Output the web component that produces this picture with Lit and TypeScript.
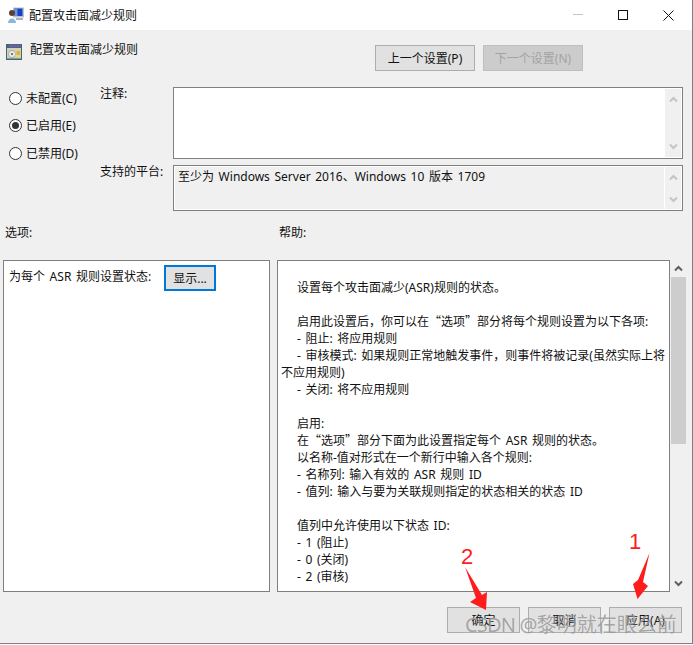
import { LitElement, html, css, svg } from "lit";
import { customElement } from "lit/decorators.js";

const up = (dis: boolean) => html`<svg class="chev ${dis ? "dis" : ""}" viewBox="0 0 9 7" width="9" height="7"><path d="M1 5.5 L4.5 2 L8 5.5" /></svg>`;
const down = (dis: boolean) => html`<svg class="chev ${dis ? "dis" : ""}" viewBox="0 0 9 7" width="9" height="7"><path d="M1 1.5 L4.5 5 L8 1.5" /></svg>`;

const helpLines = [
  "设置每个攻击面减少(ASR)规则的状态。",
  "",
  "启用此设置后，你可以在“选项”部分将每个规则设置为以下各项:",
  "- 阻止: 将应用规则",
  "- 审核模式: 如果规则正常地触发事件，则事件将被记录(虽然实际上将不应用规则)",
  "- 关闭: 将不应用规则",
  "",
  "启用:",
  "在“选项”部分下面为此设置指定每个 ASR 规则的状态。",
  "以名称-值对形式在一个新行中输入各个规则:",
  "- 名称列: 输入有效的 ASR 规则 ID",
  "- 值列: 输入与要为关联规则指定的状态相关的状态 ID",
  "",
  "值列中允许使用以下状态 ID:",
  "- 1 (阻止)",
  "- 0 (关闭)",
  "- 2 (审核)",
];

/* Curly quotes must come from the CJK face to keep their full-width advance. */
const withQuotes = (line: string) =>
  line.split(/([“”])/).map((part) => (part === "“" || part === "”" ? html`<span class="q">${part}</span>` : part));

@customElement("app-root")
export class AppRoot extends LitElement {
  static styles = css`
    :host {
      display: block;
      width: 693px;
      height: 645px;
      background: #fff;
      position: relative;
      overflow: hidden;
      font-family: "Noto Sans", "Noto Sans CJK SC", sans-serif;
      font-size: 12px;
      line-height: 17px;
      color: #111;
      word-spacing: 1.5px;
      text-spacing-trim: space-all;
    }
    .q { font-family: "Noto Sans CJK SC", sans-serif; line-height: 0; }
    .window {
      box-sizing: border-box;
      width: 693px;
      height: 644px;
      border-right: 1px solid #808080;
      border-bottom: 1px solid #808080;
      background: #f0f0f0;
      display: flex;
      flex-direction: column;
    }
    .titlebar {
      height: 30px;
      background: #fff;
      display: flex;
      align-items: center;
      padding-left: 8px;
      gap: 5px;
    }
    .controls {
      margin-left: auto;
      display: flex;
      align-items: center;
      gap: 35px;
      margin-right: 18px;
    }
    .controls svg { display: block; }
    .header {
      display: flex;
      padding: 15px 109px 0 6px;
      height: 26px;
    }
    .heading {
      display: flex;
      gap: 8px;
      margin-top: -1px;
    }
    .heading span { margin-top: -3px; }
    .nav { margin-left: auto; display: flex; gap: 8px; }
    .btn {
      box-sizing: border-box;
      height: 26px;
      border: 1px solid #adadad;
      background: #e1e1e1;
      display: flex;
      align-items: center;
      justify-content: center;
      white-space: nowrap;
    }
    .nav .btn { width: 100px; }
    .btn.disabled {
      background: #cccccc;
      border-color: #bfbfbf;
      color: #a3a3a3;
    }
    .config {
      display: grid;
      grid-template-columns: 100px 73px 510px;
      grid-template-rows: 72px 46px;
      row-gap: 6px;
      margin-top: 16px;
    }
    .radios {
      grid-row: 1 / 3;
      display: flex;
      flex-direction: column;
      gap: 5.5px;
      padding-left: 9px;
    }
    .radio { height: 22px; display: flex; align-items: center; gap: 4px; }
    .circle {
      box-sizing: border-box;
      width: 13px;
      height: 13px;
      border: 1px solid #333;
      border-radius: 50%;
      background: #fff;
      display: flex;
      align-items: center;
      justify-content: center;
    }
    .circle i {
      width: 7px;
      height: 7px;
      border-radius: 50%;
      background: #333;
    }
    .field-label { margin-top: -2px; }
    .box {
      box-sizing: border-box;
      border: 1px solid #7f7f7f;
      background: #fff;
      display: flex;
      padding: 1px;
    }
    .box.readonly { background: #f0f0f0; box-shadow: inset 0 0 0 1px #fff; }
    .box-text { flex: 1; padding: 2px 0 0 3px; white-space: nowrap; margin-top: -1px; }
    .mini-scroll {
      width: 16px;
      background: #f0f0f0;
      display: flex;
      flex-direction: column;
      justify-content: space-between;
      align-items: center;
      padding: 7px 0;
      box-sizing: border-box;
    }
    .readonly .mini-scroll { border-left: 1px solid #fff; width: 17px; padding: 7px 0 6px; }
    .chev { display: block; fill: none; stroke: #5f5f5f; stroke-width: 2; }
    .chev.dis { stroke: #c4c4c4; }
    .section-labels {
      display: grid;
      grid-template-columns: 274px 1fr;
      margin-top: 13px;
      height: 17px;
      padding-left: 5px;
      box-sizing: border-box;
    }
    .panels {
      display: flex;
      margin-top: 19px;
      padding-left: 3px;
      height: 332px;
    }
    .panel {
      box-sizing: border-box;
      border: 1px solid #7f7f7f;
      background: #fff;
      height: 332px;
    }
    .options {
      width: 267px;
      display: flex;
      padding: 4px 0 0 5px;
      align-items: flex-start;
    }
    .options .lead { width: 155px; white-space: nowrap; margin-top: 3px; }
    .show {
      box-sizing: border-box;
      width: 52px;
      height: 26px;
      border: 2px solid #0078d7;
      background: #e1e1e1;
      display: flex;
      align-items: center;
      justify-content: center;
    }
    .help {
      width: 393px;
      margin-left: 7px;
      padding: 18px 0 0 3px;
      overflow: hidden;
    }
    .help p {
      margin: 0;
      min-height: 17px;
      text-indent: 16px;
      width: 386px;
    }
    .scroll {
      width: 17px;
      display: flex;
      flex-direction: column;
      align-items: center;
    }
    .scroll .cap { height: 17px; display: flex; align-items: center; justify-content: center; flex: none; }
    .thumb { width: 15px; height: 167px; background: #cdcdcd; flex: none; }
    .scroll .end { margin-top: auto; }
    .footer {
      display: flex;
      justify-content: flex-end;
      gap: 8px;
      padding-right: 10px;
      margin-top: 15px;
    }
    .footer .btn { width: 73px; }
    .overlay {
      position: absolute;
      left: 0;
      top: 0;
      pointer-events: none;
    }
    .num {
      font-family: "Liberation Sans", sans-serif;
      font-size: 22px;
      fill: #ff1c1c;
    }
    .watermark {
      position: absolute;
      left: 465px;
      top: 611px;
      font-size: 20px;
      line-height: 28px;
      white-space: nowrap;
      word-spacing: 0;
      color: rgba(120, 120, 120, 0.65);
      text-shadow: 0 0 1px rgba(255, 255, 255, 0.6);
      pointer-events: none;
    }
    .watermark span { letter-spacing: -0.8px; }
  `;

  render() {
    return html`
      <div class="window">
        <div class="titlebar">
          <svg width="16" height="16" viewBox="0 0 16 16">
            <rect x="5" y="0.5" width="11" height="10" fill="#b8c4d4" />
            <rect x="6.5" y="1.5" width="8" height="7.5" fill="#1a3fc0" />
            <rect x="6.5" y="1.5" width="3" height="7.5" fill="#6f8fe0" />
            <rect x="8" y="11" width="7" height="2" fill="#a9b3bf" />
            <circle cx="4" cy="6" r="3" fill="#5b4030" />
            <path d="M0 16 C0 10 8 10 8 16 Z" fill="#8ab8dc" />
          </svg>
          <span>配置攻击面减少规则</span>
          <div class="controls">
            <svg width="10" height="10" viewBox="0 0 10 10"><path d="M0 4.5H10" stroke="#c4c4c4" /></svg>
            <svg width="10" height="10" viewBox="0 0 10 10"><rect x="0.5" y="0.5" width="9" height="9" fill="none" stroke="#111" /></svg>
            <svg width="11" height="11" viewBox="0 0 11 11"><path d="M0.5 0.5L10.5 10.5M10.5 0.5L0.5 10.5" stroke="#111" /></svg>
          </div>
        </div>
        <div class="header">
          <div class="heading">
            <svg width="16" height="16" viewBox="0 0 16 16">
              <rect width="16" height="16" fill="#3d6b6b" />
              <rect x="3" y="0.5" width="12" height="3" fill="#6a5fa0" />
              <rect x="1" y="4" width="14" height="10.5" fill="#cfd0c0" />
              <circle cx="6" cy="10" r="3.6" fill="#e9e9e4" stroke="#8f8f88" stroke-width="0.6" />
              <circle cx="6" cy="10" r="1" fill="#555" />
              <rect x="9.5" y="5.5" width="5" height="8" fill="#f0d278" />
              <path d="M10.5 8H14M10.5 10H14" stroke="#8a7a40" stroke-width="0.7" />
            </svg>
            <span>配置攻击面减少规则</span>
          </div>
          <div class="nav">
            <div class="btn">上一个设置(P)</div>
            <div class="btn disabled">下一个设置(N)</div>
          </div>
        </div>
        <div class="config">
          <div class="radios">
            <div class="radio"><span class="circle"></span>未配置(C)</div>
            <div class="radio"><span class="circle"><i></i></span>已启用(E)</div>
            <div class="radio"><span class="circle"></span>已禁用(D)</div>
          </div>
          <div class="field-label">注释:</div>
          <div class="box">
            <div class="box-text"></div>
            <div class="mini-scroll">${up(true)}${down(true)}</div>
          </div>
          <div class="field-label">支持的平台:</div>
          <div class="box readonly">
            <div class="box-text">至少为 Windows Server 2016、Windows 10 版本 1709</div>
            <div class="mini-scroll">${up(true)}${down(true)}</div>
          </div>
        </div>
        <div class="section-labels"><span>选项:</span><span>帮助:</span></div>
        <div class="panels">
          <div class="panel options">
            <div class="lead">为每个 ASR 规则设置状态:</div>
            <div class="show">显示...</div>
          </div>
          <div class="panel help">
            ${helpLines.map((l) => html`<p>${withQuotes(l)}</p>`)}
          </div>
          <div class="scroll">
            <div class="cap">${up(false)}</div>
            <div class="thumb"></div>
            <div class="cap end">${down(false)}</div>
          </div>
        </div>
        <div class="footer">
          <div class="btn">确定</div>
          <div class="btn">取消</div>
          <div class="btn">应用(A)</div>
        </div>
      </div>
      <div class="watermark"><span>CSDN @</span>黎明就在眼么前</div>
      <svg class="overlay" width="693" height="645" viewBox="0 0 693 645">
        ${svg`
          <polygon points="649.5,553 643,582 648,586 637.5,599 633,584 638,580" fill="#ff1c1c" />
          <polygon points="465,567 482,595 487,592 486,610 470,602 476,598" fill="#ff1c1c" />
          <text class="num" x="629" y="549">1</text>
          <text class="num" x="461" y="564">2</text>
        `}
      </svg>
    `;
  }
}
